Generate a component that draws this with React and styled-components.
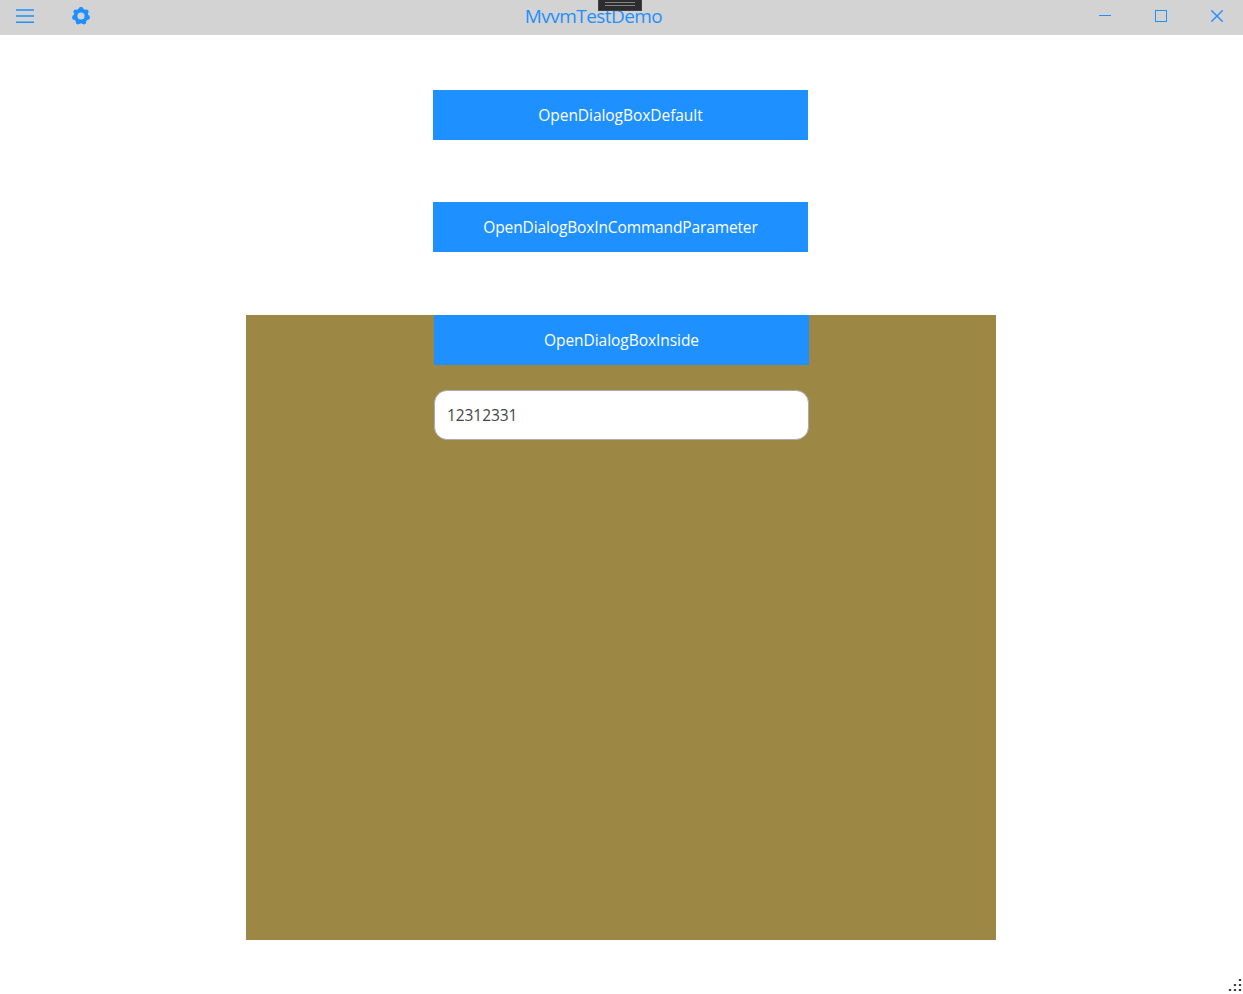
import React from "react";
import styled, { createGlobalStyle } from "styled-components";

const GlobalStyle = createGlobalStyle`
  * { box-sizing: border-box; }
  body {
    margin: 0;
    background: #fff;
    font-family: "Open Sans", "Noto Sans", sans-serif;
    overflow: hidden;
  }
`;

const Window = styled.div`
  position: relative;
  display: flex;
  flex-direction: column;
  width: 1243px;
  height: 994px;
`;

const TitleBar = styled.header`
  display: flex;
  justify-content: space-between;
  height: 35px;
  background: #d3d3d3;
  color: #1e90ff;
`;

const BarGroup = styled.div`
  display: flex;
  gap: ${(p) => p.$gap}px;
  padding: ${(p) => p.$pad};
`;

const IconButton = styled.button`
  width: ${(p) => p.$size}px;
  height: ${(p) => p.$size}px;
  padding: 0;
  border: 0;
  background: none;
  color: inherit;
  svg { display: block; }
`;

const Title = styled.h1`
  margin: 0 2px 0 0;
  font-size: 19px;
  font-weight: 400;
  line-height: 33px;
  letter-spacing: -0.55px;
  white-space: nowrap;
`;

const DebugHandle = styled.div`
  position: absolute;
  top: 0;
  left: 598px;
  display: flex;
  flex-direction: column;
  gap: 2px;
  width: 44px;
  height: 11px;
  padding: 2px 6px 0;
  background: #2d2d30;
  border: 1px solid #434346;
  border-top: 0;
`;

const HandleLine = styled.span`
  height: 1px;
  background: #858587;
`;

const Content = styled.main`
  display: flex;
  flex-direction: column;
  align-items: center;
  padding: 55px 2px 0 0;
`;

const ActionButton = styled.button`
  width: 375px;
  height: 50px;
  margin: 0 0 ${(p) => p.$below}px;
  padding: 0;
  border: 0;
  background: #1e90ff;
  color: #fff;
  font-family: inherit;
  font-size: 15.5px;
  font-weight: 450;
  line-height: 51px;
  letter-spacing: ${(p) => p.$spacing}px;
`;

const DialogHost = styled.section`
  display: flex;
  flex-direction: column;
  align-items: center;
  width: 750px;
  height: 625px;
  padding-left: 1px;
  margin-left: 1px;
  background: #9c8744;
`;

const TextBox = styled.input`
  width: 375px;
  height: 50px;
  padding: 0 12px;
  border: 1px solid #acacac;
  border-radius: 13px;
  background: #fff;
  color: #444;
  font-family: inherit;
  font-size: 15.5px;
  letter-spacing: -0.08px;
  outline: 0;
`;

const ResizeGrip = styled.svg`
  position: absolute;
  left: 1228px;
  top: 978px;
`;

const lobes = Array.from({ length: 7 }, (_, i) => {
  const a = -Math.PI / 2 + (i * 2 * Math.PI) / 7;
  return [9 + 6.7 * Math.cos(a), 9 + 6.7 * Math.sin(a)];
});

const gripDots = [[11, 1], [6, 6], [11, 6], [1, 11], [6, 11], [11, 11]];

const MenuIcon = () => (
  <svg width="18" height="18" stroke="currentColor" strokeWidth="1.6">
    <path d="M0 3H18M0 9H18M0 15.2H18" />
  </svg>
);

const GearIcon = () => (
  <svg width="18" height="18" fill="currentColor">
    <circle cx="9" cy="9" r="5.5" fill="none" stroke="currentColor" strokeWidth="3.8" />
    {lobes.map(([x, y]) => <circle key={x} cx={x} cy={y} r="2.4" />)}
  </svg>
);

const MinimizeIcon = () => (
  <svg width="12" height="12" stroke="currentColor"><path d="M0 5.5H12" /></svg>
);

const MaximizeIcon = () => (
  <svg width="12" height="12" stroke="currentColor" fill="none">
    <rect x="0.5" y="0.5" width="11" height="11" />
  </svg>
);

const CloseIcon = () => (
  <svg width="12" height="12" stroke="currentColor" strokeWidth="1.4">
    <path d="M0.3 0.3L11.7 11.7M11.7 0.3L0.3 11.7" />
  </svg>
);

export default function App() {
  return (
    <Window>
      <GlobalStyle />
      <TitleBar>
        <BarGroup $gap={38} $pad="7px 0 0 16px">
          <IconButton $size={18} aria-label="Menu"><MenuIcon /></IconButton>
          <IconButton $size={18} aria-label="Settings"><GearIcon /></IconButton>
        </BarGroup>
        <Title>MvvmTestDemo</Title>
        <BarGroup $gap={44} $pad="10px 20px 0 0">
          <IconButton $size={12} aria-label="Minimize"><MinimizeIcon /></IconButton>
          <IconButton $size={12} aria-label="Maximize"><MaximizeIcon /></IconButton>
          <IconButton $size={12} aria-label="Close"><CloseIcon /></IconButton>
        </BarGroup>
      </TitleBar>
      <DebugHandle><HandleLine /><HandleLine /></DebugHandle>
      <Content>
        <ActionButton $below={62} $spacing={-0.05}>OpenDialogBoxDefault</ActionButton>
        <ActionButton $below={63} $spacing={-0.13}>OpenDialogBoxInCommandParameter</ActionButton>
        <DialogHost>
          <ActionButton $below={25} $spacing={-0.05}>OpenDialogBoxInside</ActionButton>
          <TextBox defaultValue="12312331" />
        </DialogHost>
      </Content>
      <ResizeGrip width="14" height="14">
        {gripDots.map(([x, y]) => (
          <g key={`${x}-${y}`}>
            <rect x={x - 0.5} y={y} width="3" height="2" fill="#c8c8c8" />
            <rect x={x} y={y} width="2" height="2" fill="#3c3c3c" />
          </g>
        ))}
      </ResizeGrip>
    </Window>
  );
}
